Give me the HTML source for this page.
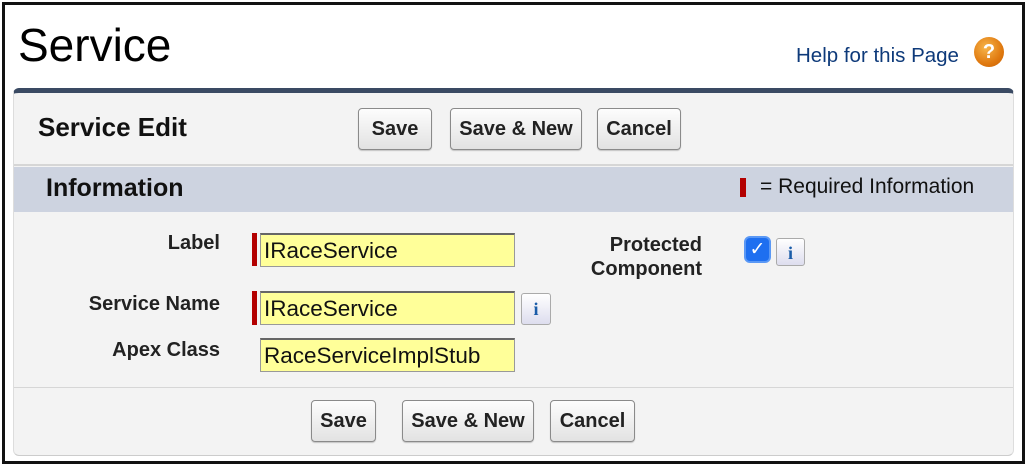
<!DOCTYPE html>
<html><head><style>
*{margin:0;padding:0;box-sizing:border-box}
body{width:1028px;height:466px;background:#fff;font-family:"Liberation Sans",Arial,sans-serif;position:relative;overflow:hidden}
.frame{position:absolute;left:2px;top:2px;width:1023px;height:462px;border:3px solid #111}
.a{position:absolute;white-space:nowrap}
.btn{position:absolute;border:1px solid #8a8a8a;border-radius:4px;background:linear-gradient(#fdfdfd,#e2e2e2);font-weight:bold;font-size:20px;color:#222;text-align:center;line-height:41px;box-shadow:0 1px 1px rgba(0,0,0,.2);white-space:nowrap}
.lbl{position:absolute;font-weight:bold;font-size:20px;color:#222;text-align:right;white-space:nowrap}
.inp{position:absolute;background:#ffff99;border:1px solid #999;border-top:2px solid #666;font-size:22.5px;color:#111;padding-left:3px;line-height:31px;white-space:nowrap;overflow:hidden}
.req{position:absolute;width:5px;background:#b30000}
.info{position:absolute;border:1px solid #aaa;border-radius:3px;background:linear-gradient(#fff,#dde);color:#1a5ca8;font-family:"Liberation Serif",serif;font-weight:bold;font-size:18px;text-align:center;line-height:28px}
</style></head><body>
<div class="frame"></div>
<div class="a" style="left:18px;top:18px;font-size:46px;color:#000">Service</div>
<div class="a" style="left:796px;top:44px;font-size:20.5px;color:#0e3a7a">Help for this Page</div>
<div class="a" style="left:974px;top:37px;width:30px;height:30px;border-radius:50%;background:radial-gradient(circle at 40% 35%,#f7b54a,#e07a10 60%,#c85e00);color:#fff;font-weight:bold;font-size:20px;text-align:center;line-height:30px">?</div>
<div class="a" style="left:13px;top:88px;width:1001px;height:368px;background:#f3f3f3;border-top:5px solid #3a4a63;border-radius:6px 6px 6px 6px;border-left:1px solid #ddd;border-right:1px solid #ddd;border-bottom:1px solid #ccc"></div>
<div class="a" style="left:38px;top:112px;font-weight:bold;font-size:26px;color:#111">Service Edit</div>
<div class="btn" style="left:358px;top:108px;width:74px;height:42px">Save</div>
<div class="btn" style="left:450px;top:108px;width:132px;height:42px">Save &amp; New</div>
<div class="btn" style="left:597px;top:108px;width:84px;height:42px">Cancel</div>
<div class="a" style="left:14px;top:164px;width:999px;height:2px;background:#d6d6d6"></div>
<div class="a" style="left:14px;top:167px;width:999px;height:45px;background:#cdd3e0"></div>
<div class="a" style="left:46px;top:174px;font-weight:bold;font-size:25px;color:#111">Information</div>
<div class="req" style="left:740px;top:178px;height:19px;width:6px"></div>
<div class="a" style="left:760px;top:175px;font-size:21px;color:#111">= Required Information</div>
<div class="lbl" style="left:60px;top:232px;width:160px">Label</div>
<div class="req" style="left:252px;top:233px;height:33px"></div>
<div class="inp" style="left:260px;top:233px;width:255px;height:34px">IRaceService</div>
<div class="lbl" style="left:40px;top:293px;width:180px">Service Name</div>
<div class="req" style="left:252px;top:291px;height:34px"></div>
<div class="inp" style="left:260px;top:291px;width:255px;height:34px">IRaceService</div>
<div class="info" style="left:521px;top:293px;width:30px;height:32px;line-height:30px">i</div>
<div class="lbl" style="left:40px;top:339px;width:180px">Apex Class</div>
<div class="inp" style="left:260px;top:338px;width:255px;height:34px">RaceServiceImplStub</div>
<div class="lbl" style="left:540px;top:233px;width:162px;line-height:24px">Protected<br>Component</div>
<div class="a" style="left:744px;top:236px;width:27px;height:27px;border-radius:6px;background:#1e6ff0;border:2px solid #5a98f5;color:#fff;font-size:19px;text-align:center;line-height:23px">✓</div>
<div class="info" style="left:776px;top:238px;width:29px;height:28px">i</div>
<div class="a" style="left:14px;top:387px;width:999px;height:1px;background:#d6d6d6"></div>
<div class="btn" style="left:311px;top:400px;width:65px;height:42px">Save</div>
<div class="btn" style="left:402px;top:400px;width:132px;height:42px">Save &amp; New</div>
<div class="btn" style="left:550px;top:400px;width:85px;height:42px">Cancel</div>
</body></html>
